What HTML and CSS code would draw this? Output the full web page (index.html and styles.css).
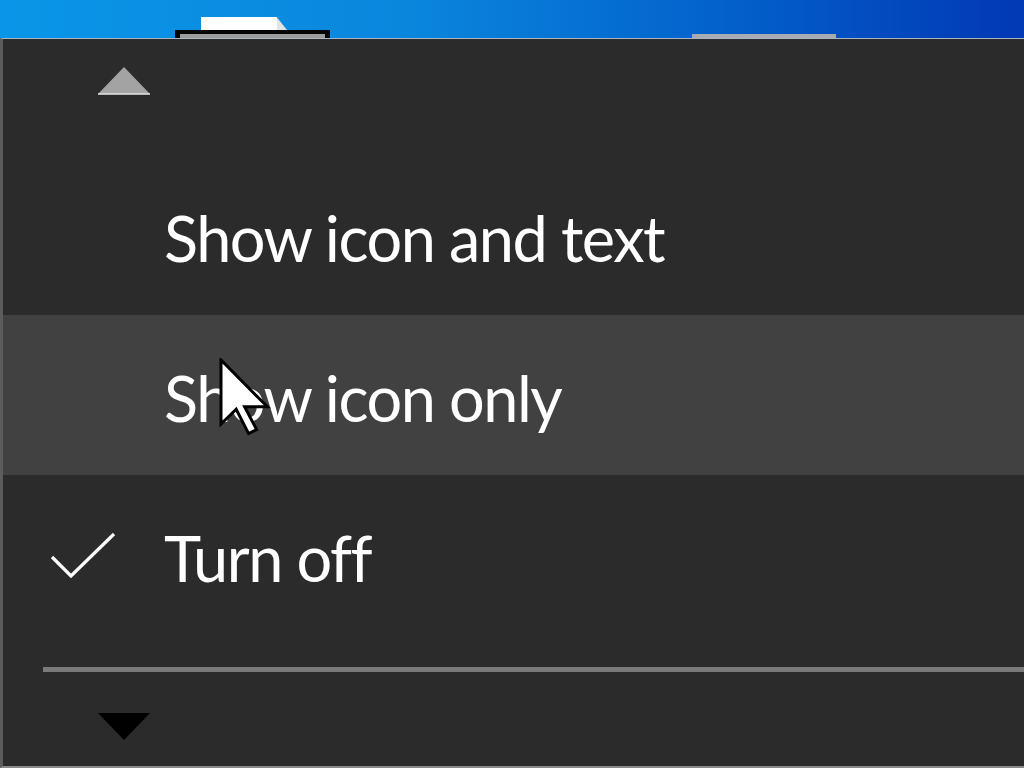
FILE: index.html
```html
<!DOCTYPE html>
<html>
<head>
<meta charset="utf-8">
<link rel="stylesheet" href="styles.css">
</head>
<body>
<div class="desktop">
  <div class="doc-icon"></div>
  <div class="win-thumb a"><div class="win-inner"></div></div>
  <div class="win-thumb b"></div>
</div>
<div class="menu">
  <div class="scroll up"><svg width="54" height="28" viewBox="0 0 54 28"><polygon points="27,0 53,27 1,27" fill="#a3a3a3"/><line x1="1" y1="27" x2="53" y2="27" stroke="#e6e6e6" stroke-width="1.5"/></svg></div>
  <div class="item"><span class="check"></span><span class="label">Show icon and text</span></div>
  <div class="item hover"><span class="check"></span><span class="label">Show icon only</span></div>
  <div class="item"><span class="check"><svg width="66" height="50" viewBox="0 0 66 50"><polyline points="2,25 21,44 64,2" fill="none" stroke="#fff" stroke-width="3.2"/></svg></span><span class="label">Turn off</span></div>
  <div class="separator"></div>
  <div class="scroll down"><svg width="54" height="28" viewBox="0 0 54 28"><polygon points="1,0 53,0 27,27" fill="#000"/></svg></div>
</div>
<svg class="cursor" width="52" height="80" viewBox="-0.5 -0.5 13 20"><path d="M0 0 V16 L3.8 12.3 L6.9 18.4 L8.9 17.4 L5.9 11.7 L11.6 11.7 Z" fill="#fff" stroke="#000" stroke-width="0.75" stroke-linejoin="miter"/></svg>
</body>
</html>
```

FILE: styles.css
```css
html, body {
  margin: 0;
  padding: 0;
  width: 1024px;
  height: 768px;
  overflow: hidden;
  background: #2b2b2b;
  font-family: "Open Sans", "Noto Sans", sans-serif;
}
.desktop {
  position: relative;
  height: 38px;
  background: linear-gradient(90deg, #0a96e8 0%, #0a86dd 40%, #0362cc 70%, #0238b4 100%);
  overflow: hidden;
}
.doc-icon {
  position: absolute;
  left: 201px;
  top: 17px;
  width: 90px;
  height: 30px;
  background: linear-gradient(90deg, #ffffff 0 84%, #e4e4e4 84%);
  clip-path: polygon(0 0, 84% 0, 100% 60%, 100% 100%, 0 100%);
}
.win-thumb {
  position: absolute;
  top: 30px;
  height: 12px;
}
.win-thumb.a {
  left: 175px;
  width: 155px;
  background: #050505;
}
.win-inner {
  margin: 4px 5px 0;
  height: 8px;
  background: #9c9c9c;
}
.win-thumb.b {
  left: 692px;
  top: 34px;
  width: 144px;
  background: #a9abb3;
}
.menu {
  height: 727px;
  border-top: 1px solid #a8b4c4;
  border-left: 3px solid #5c5c5c;
  border-bottom: 2px solid #8a8a8a;
  background: #2b2b2b;
  display: flex;
  flex-direction: column;
  box-sizing: content-box;
}
.scroll {
  padding-left: 94px;
}
.scroll svg { display: block; }
.scroll.up {
  height: 116px;
  padding-top: 28px;
  box-sizing: border-box;
}
.scroll.down {
  padding-top: 41px;
}
.item {
  height: 160px;
  display: flex;
  align-items: center;
  color: #fff;
  font-family: Lato, "Open Sans", sans-serif;
  font-size: 63px;
}
.item.hover {
  background: #414141;
}
.check {
  width: 161px;
  flex: none;
  display: flex;
  padding-left: 47px;
  box-sizing: border-box;
  padding-top: 4px;
}
.check svg { display: block; }
.label {
  line-height: 1;
  padding-top: 4px;
  letter-spacing: -1.5px;
}
.separator {
  height: 5px;
  margin: 32px 0 0 40px;
  background: #7a7a7a;
}
.cursor {
  position: absolute;
  left: 219px;
  top: 358px;
}
```
